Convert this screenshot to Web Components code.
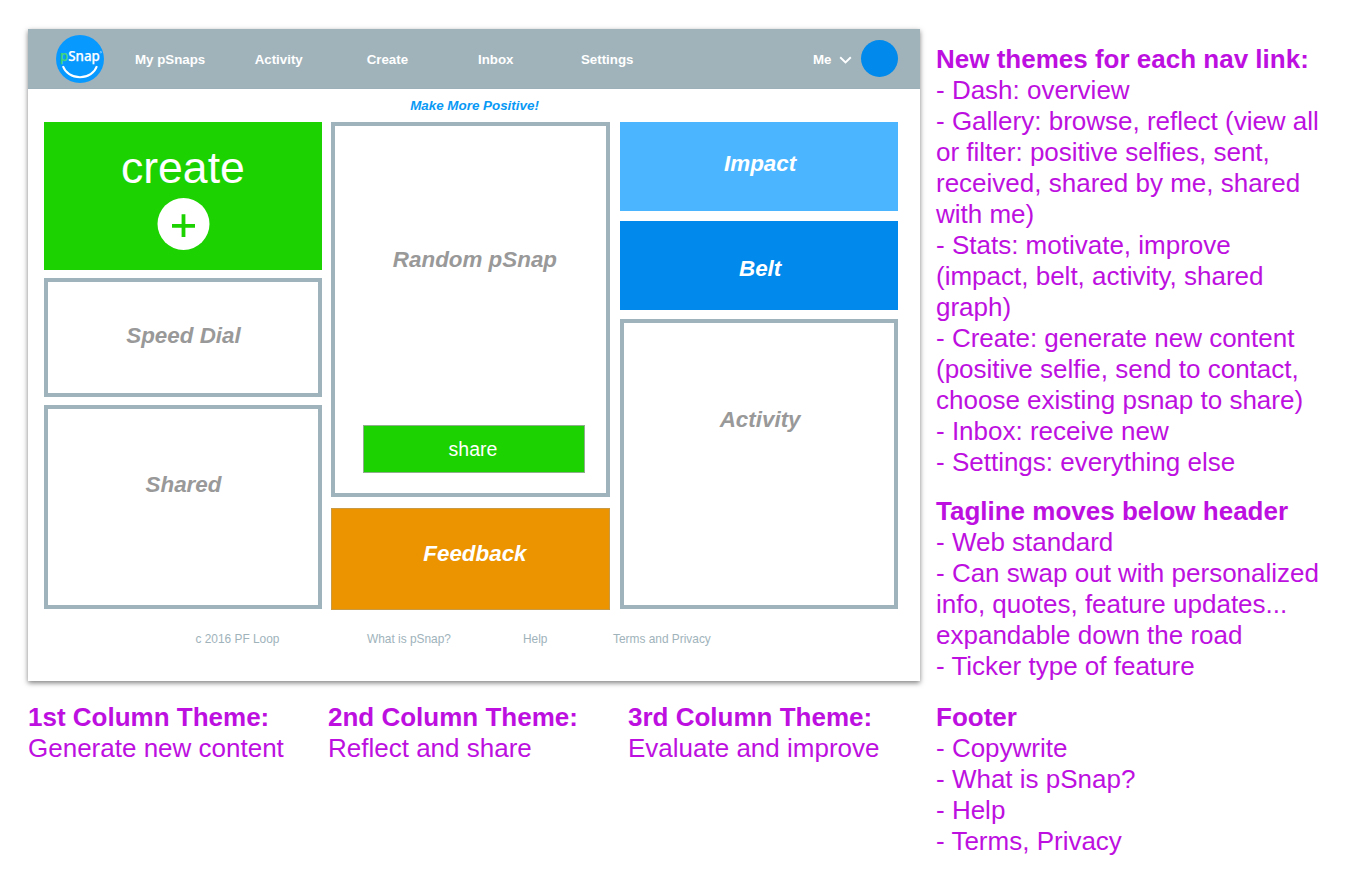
<!DOCTYPE html>
<html lang="en">
<head>
<meta charset="utf-8">
<title>pSnap dashboard wireframe</title>
<style>
html,body{margin:0;background:#fff}
body{font-family:"Liberation Sans",Arial,Helvetica,sans-serif;width:1347px;height:875px;overflow:hidden}
</style>
</head>
<body>
<wire-board></wire-board>
<script>
const define = (name, html) => customElements.define(name, class extends HTMLElement {
  constructor() {
    super();
    const t = document.createElement('template');
    t.innerHTML = html;
    this.attachShadow({ mode: 'open' }).append(t.content.cloneNode(true));
  }
});

define('snap-logo', `
<style>:host{display:block;width:48px;height:48px;margin-top:2px}svg{display:block;overflow:visible}
text{font-family:"Noto Sans","Open Sans",sans-serif;font-weight:500}</style>
<svg width="48" height="48" viewBox="0 0 48 48">
<circle cx="24" cy="24" r="24" fill="#0899ff"/>
<text x="4" y="25.8" font-size="13.6" textLength="39.8" lengthAdjust="spacingAndGlyphs" fill="#fff" stroke="#fff" stroke-width=".25"><tspan fill="#45d878" stroke="#45d878">p</tspan>Snap</text>
<circle cx="44.8" cy="17.2" r=".8" fill="none" stroke="#fff" stroke-width=".4"/>
<path d="M6.9 31.2C9.3 37.8 15.8 42.2 24 42.2S38.6 37.8 40.9 31.2" fill="none" stroke="#fff" stroke-width="2"/>
</svg>`);

define('user-menu', `
<style>:host{display:flex;align-items:center;color:#fff;font:bold 13.3px/16px "Liberation Sans",Arial,sans-serif}
svg{display:block;margin:4px 0 0 7px}i{width:37.4px;height:37.4px;border-radius:50%;background:#018aeb;margin-left:9.3px}
span{margin-top:3px}</style>
<span><slot></slot></span>
<svg width="13" height="8" viewBox="0 0 13 8"><path d="M1.2 1.3 6.5 6.4 11.8 1.3" fill="none" stroke="#fff" stroke-width="1.9"/></svg><i></i>`);

define('app-header', `
<style>:host{display:flex;align-items:center;box-sizing:border-box;height:59.5px;padding:0 21.8px 0 28px;background:#a0b3bb;border-bottom:1px solid #9bb0b9}
nav{display:grid;grid-template-columns:119.7px 112px 111.3px 103px auto;margin:3px 0 0 31px;color:#fff;font:bold 13.3px/16px "Liberation Sans",Arial,sans-serif}
user-menu{margin-left:auto}</style>
<snap-logo></snap-logo>
<nav><span>My pSnaps</span><span>Activity</span><span>Create</span><span>Inbox</span><span>Settings</span></nav>
<user-menu>Me</user-menu>`);

define('dash-tile', `
<style>:host{display:flex;flex-direction:column;align-items:center;box-sizing:border-box;height:var(--h);padding-top:var(--top);
background:var(--bg,#fff);border:var(--line,4px solid #9fb3bc);color:var(--ink,#999);font:italic bold 22.4px/26px "Liberation Sans",Arial,sans-serif;white-space:nowrap}
.t{transform:translateX(var(--dx,0px))}</style>
<span class="t"><slot></slot></span><slot name="action"></slot>`);

define('share-button', `
<style>:host{display:block;box-sizing:border-box;width:222px;height:48px;margin:152px 0 0 7px;border:1px solid #8fae8c;background:#1cd200;color:#fff;
font:normal 19.5px/47px "Liberation Sans",Arial,sans-serif;text-align:center;text-indent:-3px}</style><slot></slot>`);

define('create-tile', `
<style>:host{display:flex;flex-direction:column;align-items:center;height:148px;background:#1cd200;color:#fff;font:44.6px/50px "Liberation Sans",Arial,sans-serif}
span{margin-top:20.5px}svg{display:block;margin:4.5px 0 0 1.5px}</style>
<span><slot></slot></span>
<svg width="53" height="53" viewBox="0 0 53 53"><circle cx="26.5" cy="26.9" r="26" fill="#fff"/><path d="M15 28.8H38M26.5 17.2V40" stroke="#1cd200" stroke-width="3.8"/></svg>`);

define('app-footer', `
<style>:host{display:grid;grid-template-columns:171.5px 156px 90px auto;margin:22px 0 0 167.5px;color:#a0b3bb;font:11.9px/14px "Liberation Sans",Arial,sans-serif}</style>
<span>c 2016 PF Loop</span><span>What is pSnap?</span><span>Help</span><span>Terms and Privacy</span>`);

define('app-window', `
<style>:host{display:block;width:892px;height:652px;background:#fff;box-shadow:0 2px 5px rgba(0,0,0,.5)}
.tag{height:33.5px;font:italic bold 13.4px/33px "Liberation Sans",Arial,sans-serif;color:#0899f5;text-align:center;text-indent:1px}
main{display:grid;grid-template-columns:278.6px 278.9px 278.5px;column-gap:9.3px;padding-left:15.6px;height:487.5px}
.col{display:flex;flex-direction:column}</style>
<app-header></app-header>
<div class="tag">Make More Positive!</div>
<main>
<div class="col" style="gap:8px"><create-tile>create</create-tile>
<dash-tile style="--h:119px;--top:41px;--dx:.6px">Speed Dial</dash-tile>
<dash-tile style="--h:204px;--top:63px;--dx:.6px">Shared</dash-tile></div>
<div class="col" style="gap:10.5px"><dash-tile style="--h:375px;--top:121px;--dx:4px">Random pSnap<share-button slot="action">share</share-button></dash-tile>
<dash-tile style="--h:102px;--top:32px;--bg:#eb9400;--ink:#fff;--line:1px solid #c99a45;--dx:4px">Feedback</dash-tile></div>
<div class="col" style="gap:9.5px"><dash-tile style="--h:89px;--top:29px;--bg:#4bb6ff;--ink:#fff;--line:0;--dx:1.2px">Impact</dash-tile>
<dash-tile style="--h:89px;--top:35px;--bg:#018aeb;--ink:#fff;--line:0;--dx:1.2px">Belt</dash-tile>
<dash-tile style="--h:290px;--top:84px;--dx:1.2px">Activity</dash-tile></div>
</main>
<app-footer></app-footer>`);

define('theme-note', `
<style>:host{display:block;color:#bd10e0;font:26px/31px "Liberation Sans",Arial,sans-serif;white-space:nowrap}
b{display:block}</style>
<b><slot name="title"></slot></b><slot></slot>`);

define('wire-board', `
<style>:host{display:grid;grid-template-columns:892px auto;column-gap:16px;padding:29px 0 0 28px}
.themes{display:grid;grid-template-columns:300px 300px auto;margin-top:21px}
aside{padding-top:15px}
aside theme-note{margin-bottom:18px}aside theme-note+theme-note{margin-bottom:20px}</style>
<section>
<app-window></app-window>
<div class="themes">
<theme-note><span slot="title">1st Column Theme:</span>Generate new content</theme-note>
<theme-note><span slot="title">2nd Column Theme:</span>Reflect and share</theme-note>
<theme-note><span slot="title">3rd Column Theme:</span>Evaluate and improve</theme-note>
</div>
</section>
<aside>
<theme-note><span slot="title">New themes for each nav link:</span>- Dash: overview<br>- Gallery: browse, reflect (view all<br>or filter: positive selfies, sent,<br>received, shared by me, shared<br>with me)<br>- Stats: motivate, improve<br>(impact, belt, activity, shared<br>graph)<br>- Create: generate new content<br>(positive selfie, send to contact,<br>choose existing psnap to share)<br>- Inbox: receive new<br>- Settings: everything else</theme-note>
<theme-note><span slot="title">Tagline moves below header</span>- Web standard<br>- Can swap out with personalized<br>info, quotes, feature updates...<br>expandable down the road<br>- Ticker type of feature</theme-note>
<theme-note><span slot="title">Footer</span>- Copywrite<br>- What is pSnap?<br>- Help<br>- Terms, Privacy</theme-note>
</aside>`);
</script>
</body>
</html>
